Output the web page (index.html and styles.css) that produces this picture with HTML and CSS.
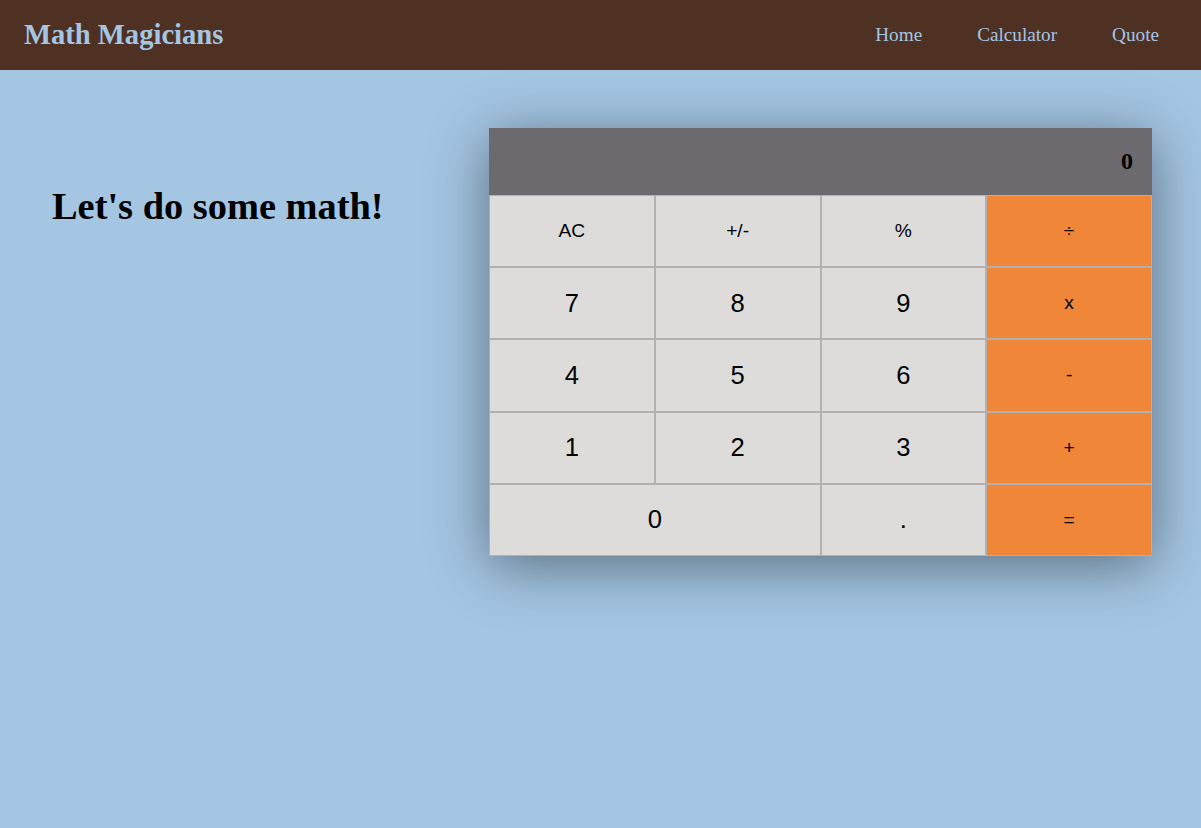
FILE: index.html
```html
<!DOCTYPE html>
<html>
<head>
<meta charset="utf-8">
<link rel="stylesheet" href="styles.css">
</head>
<body>
<header class="nav">
  <h1 class="brand">Math Magicians</h1>
  <nav class="links">
    <a href="#">Home</a>
    <a href="#">Calculator</a>
    <a href="#">Quote</a>
  </nav>
</header>
<main class="main">
  <h2 class="heading">Let's do some math!</h2>
  <div class="calc">
    <div class="display">0</div>
    <div class="keys">
      <button class="key fn">AC</button>
      <button class="key fn">+/-</button>
      <button class="key fn">%</button>
      <button class="key op">÷</button>
      <button class="key num">7</button>
      <button class="key num">8</button>
      <button class="key num">9</button>
      <button class="key op">x</button>
      <button class="key num">4</button>
      <button class="key num">5</button>
      <button class="key num">6</button>
      <button class="key op">-</button>
      <button class="key num">1</button>
      <button class="key num">2</button>
      <button class="key num">3</button>
      <button class="key op">+</button>
      <button class="key num wide">0</button>
      <button class="key num">.</button>
      <button class="key op">=</button>
    </div>
  </div>
</main>
</body>
</html>
```
FILE: styles.css
```css
html, body {
  margin: 0;
  padding: 0;
}
body {
  background: #a4c6e3;
  font-family: "Liberation Serif", "Times New Roman", serif;
  min-height: 828px;
}
.nav {
  height: 70px;
  background: #4e3123;
  display: flex;
  align-items: center;
  justify-content: space-between;
  padding: 0 42px 0 24px;
}
.brand {
  margin: 0;
  font-size: 28.6px;
  font-weight: bold;
  color: #a4c6e3;
}
.links {
  display: flex;
  gap: 55px;
}
.links a {
  color: #a4c6e3;
  text-decoration: none;
  font-size: 19.2px;
}
.main {
  display: flex;
  justify-content: space-between;
  align-items: flex-start;
  padding: 58px 49px 0 52px;
}
.heading {
  margin: 56px 0 0 0;
  font-size: 38.4px;
  font-weight: bold;
  color: #000;
}
.calc {
  width: 663px;
  box-shadow: 0 10px 55px rgba(0, 0, 0, 0.45);
}
.display {
  height: 67px;
  background: #6c6a6f;
  color: #000;
  font-family: "Liberation Serif", serif;
  font-weight: bold;
  font-size: 24px;
  display: flex;
  align-items: center;
  justify-content: flex-end;
  padding-right: 19px;
  box-sizing: border-box;
}
.keys {
  display: grid;
  grid-template-columns: repeat(4, 1fr);
  grid-auto-rows: 72.2px;
}
.key {
  margin: 0;
  border: 1px solid #b3b1af;
  background: #dddcda;
  color: #000;
  font-family: "Liberation Sans", Arial, sans-serif;
  padding: 0;
  box-sizing: border-box;
}
.fn {
  font-size: 19.2px;
}
.num {
  font-size: 25.6px;
}
.op {
  background: #f08738;
  font-size: 19.2px;
}
.wide {
  grid-column: span 2;
}
```
